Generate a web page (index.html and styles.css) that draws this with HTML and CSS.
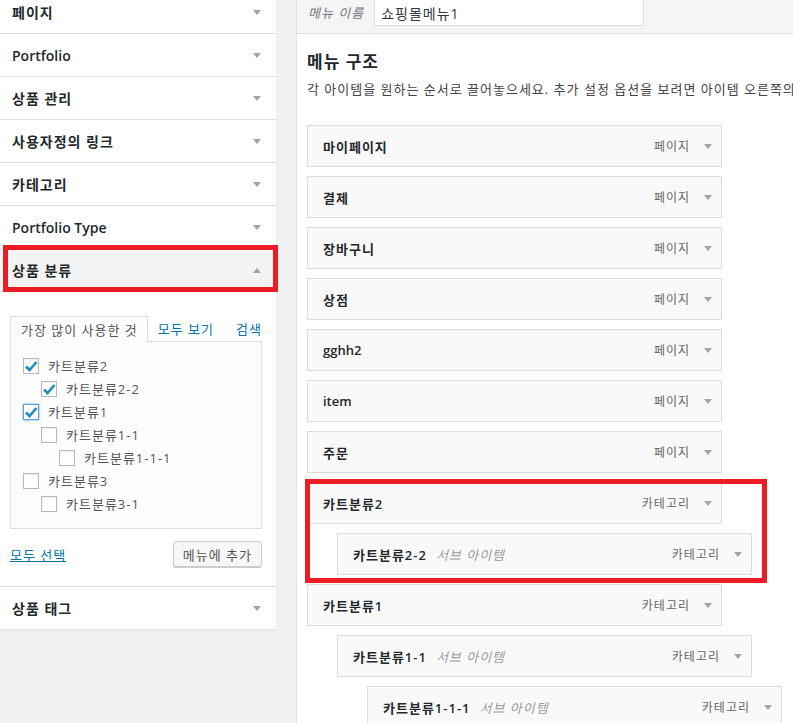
FILE: index.html
```html
<!DOCTYPE html>
<html lang="ko">
  <head>
    <meta charset="UTF-8" />
    <title>메뉴 편집</title>
    <link rel="stylesheet" href="styles.css">
  </head>
  <body>
    <div class="screen">
      <!-- Left: accordion of item sources -->
      <aside class="sidebar">
        <div class="acc-section"><h3 class="acc-title">페이지<i class="arrow"></i></h3></div>
        <div class="acc-section"><h3 class="acc-title latin">Portfolio<i class="arrow"></i></h3></div>
        <div class="acc-section"><h3 class="acc-title">상품 관리<i class="arrow"></i></h3></div>
        <div class="acc-section"><h3 class="acc-title">사용자정의 링크<i class="arrow"></i></h3></div>
        <div class="acc-section"><h3 class="acc-title">카테고리<i class="arrow"></i></h3></div>
        <div class="acc-section"><h3 class="acc-title latin">Portfolio Type<i class="arrow"></i></h3></div>

        <div class="acc-section open">
          <h3 class="acc-title">상품 분류<i class="arrow up"></i><span class="mark mark-left"></span></h3>
          <div class="acc-content">
            <ul class="tabs">
              <li class="tab active">가장 많이 사용한 것</li>
              <li class="tab"><a href="#">모두 보기</a></li>
              <li class="tab tab-last"><a href="#">검색</a></li>
            </ul>
            <div class="checklist">
              <label class="check-row"><span class="cbox"><svg viewBox="0 0 16 16"><path d="M3 8.5 L6.5 12 L13.5 4"/></svg></span>카트분류2</label>
              <label class="check-row lvl-1"><span class="cbox"><svg viewBox="0 0 16 16"><path d="M3 8.5 L6.5 12 L13.5 4"/></svg></span>카트분류2-2</label>
              <label class="check-row"><span class="cbox focus"><svg viewBox="0 0 16 16"><path d="M3 8.5 L6.5 12 L13.5 4"/></svg></span>카트분류1</label>
              <label class="check-row lvl-1"><span class="cbox"></span>카트분류1-1</label>
              <label class="check-row lvl-2"><span class="cbox"></span>카트분류1-1-1</label>
              <label class="check-row"><span class="cbox"></span>카트분류3</label>
              <label class="check-row lvl-1"><span class="cbox"></span>카트분류3-1</label>
            </div>
            <div class="actions">
              <a href="#" class="select-all">모두 선택</a>
              <button class="btn">메뉴에 추가</button>
            </div>
          </div>
        </div>

        <div class="acc-section"><h3 class="acc-title">상품 태그<i class="arrow"></i></h3></div>
      </aside>

      <!-- Right: menu structure -->
      <main class="menu-edit">
        <div class="menu-header">
          <label class="menu-label">메뉴 이름</label>
          <input class="menu-name" type="text" value="쇼핑몰메뉴1" />
        </div>
        <div class="menu-body">
          <h3 class="menu-heading">메뉴 구조</h3>
          <p class="desc">각 아이템을 원하는 순서로 끌어놓으세요. 추가 설정 옵션을 보려면 아이템 오른쪽의 화살표를 클릭하세요.</p>

          <ul class="menu-items">
            <li class="menu-item"><div class="item-bar"><span class="item-title">마이페이지</span><span class="item-type">페이지</span><i class="arrow"></i></div></li>
            <li class="menu-item"><div class="item-bar"><span class="item-title">결제</span><span class="item-type">페이지</span><i class="arrow"></i></div></li>
            <li class="menu-item"><div class="item-bar"><span class="item-title">장바구니</span><span class="item-type">페이지</span><i class="arrow"></i></div></li>
            <li class="menu-item"><div class="item-bar"><span class="item-title">상점</span><span class="item-type">페이지</span><i class="arrow"></i></div></li>
            <li class="menu-item"><div class="item-bar"><span class="item-title latin">gghh2</span><span class="item-type">페이지</span><i class="arrow"></i></div></li>
            <li class="menu-item"><div class="item-bar"><span class="item-title latin">item</span><span class="item-type">페이지</span><i class="arrow"></i></div></li>
            <li class="menu-item"><div class="item-bar"><span class="item-title">주문</span><span class="item-type">페이지</span><i class="arrow"></i></div></li>
            <li class="group">
              <span class="mark mark-right"></span>
              <ul class="menu-items">
                <li class="menu-item"><div class="item-bar"><span class="item-title">카트분류2</span><span class="item-type">카테고리</span><i class="arrow"></i></div></li>
                <li class="menu-item depth-1"><div class="item-bar"><span class="item-title">카트분류2-2</span><span class="item-sub">서브 아이템</span><span class="item-type">카테고리</span><i class="arrow"></i></div></li>
              </ul>
            </li>
            <li class="menu-item"><div class="item-bar"><span class="item-title">카트분류1</span><span class="item-type">카테고리</span><i class="arrow"></i></div></li>
            <li class="menu-item depth-1"><div class="item-bar"><span class="item-title">카트분류1-1</span><span class="item-sub">서브 아이템</span><span class="item-type">카테고리</span><i class="arrow"></i></div></li>
            <li class="menu-item depth-2"><div class="item-bar"><span class="item-title">카트분류1-1-1</span><span class="item-sub">서브 아이템</span><span class="item-type">카테고리</span><i class="arrow"></i></div></li>
          </ul>
        </div>
      </main>
    </div>
  </body>
</html>
```

FILE: styles.css
```css
body {
  margin: 0;
  height: 723px;
  overflow: hidden;
  background: #f1f1f1;
  font-family: "Open Sans", "Noto Sans CJK KR", sans-serif;
  font-size: 13px;
  letter-spacing: 1px;
  color: #444;
}

/* hangul in Noto is narrower than the original UI font, latin is not */
.latin {
  letter-spacing: 0;
}

.screen {
  display: flex;
  align-items: flex-start;
  gap: 20px;
}

/* Accordion sidebar */
.sidebar {
  width: 276px;
  flex: none;
  margin-top: -9px;
  background: #fff;
  box-shadow: 0 1px 2px rgba(0, 0, 0, 0.08);
}

.acc-section {
  border-bottom: 1px solid #dddddd;
}

.acc-section:last-child {
  border-bottom: none;
}

.acc-title {
  position: relative;
  display: flex;
  justify-content: space-between;
  align-items: center;
  margin: 0;
  height: 42px;
  padding: 0 15px 0 12px;
  box-sizing: border-box;
  font-size: 14px;
  font-weight: 600;
  color: #23282d;
  line-height: 21px;
}

.open .acc-title {
  background: #f4f4f4;
  border-bottom: 1px solid #dddddd;
  height: 43px;
}

.arrow {
  width: 0;
  height: 0;
  border-left: 4px solid transparent;
  border-right: 4px solid transparent;
  border-top: 5px solid #a0a5aa;
  flex: none;
}

.arrow.up {
  border-top: none;
  border-bottom: 5px solid #a0a5aa;
}

/* red annotation boxes */
.mark {
  position: absolute;
  box-sizing: border-box;
  border: 5px solid #ed1c24;
  pointer-events: none;
}

.mark-left {
  top: -4px;
  left: 3px;
  width: 275px;
  height: 47px;
}

.mark-right {
  top: -3px;
  left: -2px;
  width: 462px;
  height: 104px;
  z-index: 1;
}

.acc-content {
  padding: 24px 14px 19px 10px;
}

.tabs {
  display: flex;
  list-style: none;
  margin: 0;
  padding: 0;
  white-space: nowrap;
}

.tab {
  padding: 5px 0 3px 10px;
  line-height: 17px;
}

.tab a {
  color: #0073aa;
  text-decoration: none;
}

.tab.tab-last {
  margin-left: auto;
  padding-left: 0;
}

.tab.active {
  padding: 5px 9px 3px 10px;
  color: #555;
  background: #fdfdfd;
  border: 1px solid #dddddd;
  border-bottom: none;
  margin-bottom: -1px;
  position: relative;
}

.checklist {
  border: 1px solid #dddddd;
  background: #fdfdfd;
  padding: 12px 12px 13px;
}

.check-row {
  display: flex;
  align-items: center;
  height: 23px;
  color: #555;
}

.check-row.lvl-1 {
  padding-left: 18px;
}

.check-row.lvl-2 {
  padding-left: 36px;
}

.cbox {
  width: 16px;
  height: 16px;
  box-sizing: border-box;
  border: 1px solid #b4b9be;
  background: #fff;
  margin-right: 9px;
  box-shadow: inset 0 1px 2px rgba(0, 0, 0, 0.07);
  flex: none;
  position: relative;
}

.cbox.focus {
  border-color: #5b9dd9;
  box-shadow: 0 0 2px rgba(30, 140, 190, 0.8);
}

.cbox svg {
  position: absolute;
  left: -1px;
  top: -1px;
  width: 16px;
  height: 16px;
  fill: none;
  stroke: #1e8cbe;
  stroke-width: 2.6;
}

.actions {
  display: flex;
  justify-content: space-between;
  align-items: center;
  margin-top: 12px;
}

.select-all {
  color: #0073aa;
  text-decoration: underline;
}

.btn {
  height: 26px;
  padding: 0 9px;
  font-family: inherit;
  font-size: 13px;
  letter-spacing: 1px;
  color: #555;
  background: #f7f7f7;
  border: 1px solid #cccccc;
  border-radius: 3px;
  box-shadow: 0 1px 0 #cccccc;
}

/* Menu editor */
.menu-edit {
  flex: 1;
  min-width: 0;
  align-self: stretch;
  height: 723px;
  background: #fff;
  border-left: 1px solid #e2e2e2;
  overflow: hidden;
}

.menu-header {
  display: flex;
  align-items: flex-start;
  gap: 10px;
  height: 34px;
  box-sizing: border-box;
  padding: 0 11px;
  background: #f5f5f5;
  border-bottom: 1px solid #dddddd;
}

.menu-label {
  font-style: italic;
  color: #72777c;
  line-height: 26px;
}

.menu-name {
  width: 270px;
  height: 28px;
  margin-top: -2px;
  box-sizing: border-box;
  border: 1px solid #dddddd;
  padding: 2px 6px 0;
  font-family: inherit;
  font-size: 14px;
  letter-spacing: 1px;
  color: #32373c;
  background: #fff;
  outline: none;
}

.menu-body {
  padding: 16px 0 0 10px;
}

.menu-heading {
  margin: 0;
  font-size: 17px;
  font-weight: 600;
  line-height: 24px;
  color: #23282d;
}

.desc {
  margin: 6px 0 26px;
  line-height: 19px;
  white-space: nowrap;
  color: #444;
}

.menu-items {
  list-style: none;
  margin: 0;
  padding: 0;
}

.group {
  position: relative;
}

.menu-item {
  margin-bottom: 9px;
}

.menu-item.depth-1 {
  margin-left: 30px;
}

.menu-item.depth-2 {
  margin-left: 60px;
}

.item-bar {
  display: flex;
  align-items: center;
  width: 415px;
  height: 42px;
  box-sizing: border-box;
  padding: 0 9px 0 15px;
  border: 1px solid #dcdcde;
  background: #f9f9f9;
}

.item-title {
  font-weight: 600;
  color: #23282d;
}

.item-sub {
  margin-left: 9px;
  font-style: italic;
  color: #999;
}

.item-type {
  margin-left: auto;
  font-size: 12px;
  color: #666;
}

.item-bar .arrow {
  margin-left: 14px;
}
```
